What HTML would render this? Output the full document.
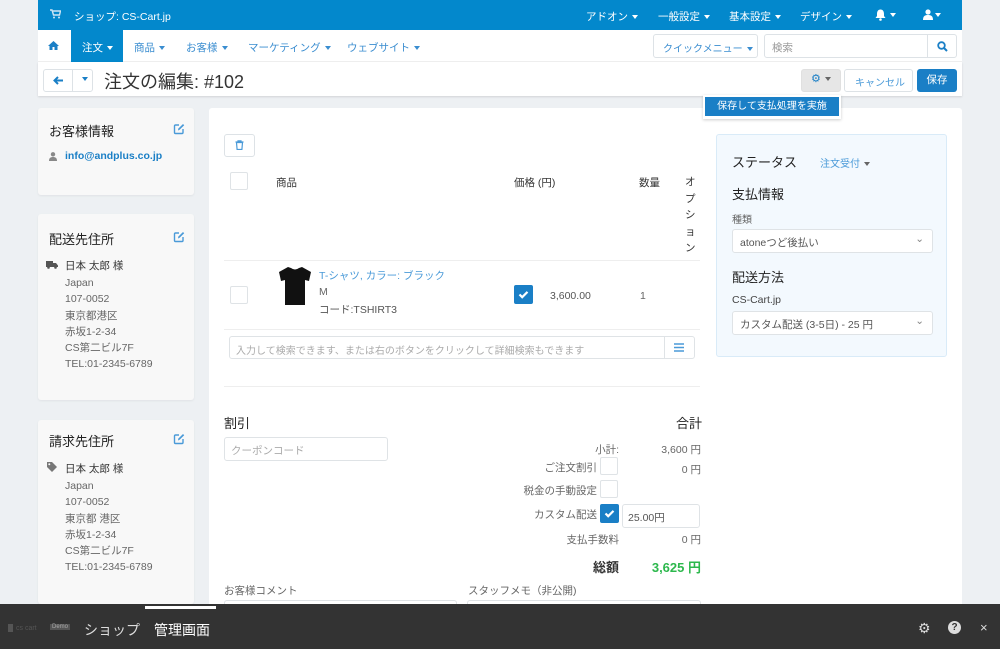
<!DOCTYPE html>
<html><head><meta charset="utf-8"><style>
*{box-sizing:border-box;margin:0;padding:0}
body{width:1000px;height:649px;overflow:hidden;background:#edf0f3;font-family:"Liberation Sans","Noto Sans CJK JP",sans-serif;font-size:11px;color:#333;position:relative}
.a{position:absolute}
.top{left:38px;top:0;width:924px;height:30px;background:#0388cc;color:#fff}
.top span{position:absolute;top:9px;font-size:10.5px}
.car{display:inline-block;width:0;height:0;border-left:3px solid transparent;border-right:3px solid transparent;border-top:4px solid currentColor;vertical-align:middle;margin-left:4px}
.nav{left:38px;top:30px;width:924px;height:32px;background:#fff;border-bottom:1px solid #f0f0f0}
.nav span{position:absolute;top:10px;color:#3a8dd0;font-size:10.5px}
.tb{left:38px;top:62px;width:924px;height:34px;background:#fff;box-shadow:0 1px 2px rgba(0,0,0,.12)}
.btn{position:absolute;border:1px solid #dde2e6;border-radius:3px;background:#fff}
.panel{background:#f8f8f8;border-radius:3px;box-shadow:0 1px 2px rgba(0,0,0,.06)}
.h{font-size:13px;color:#222;position:absolute}
.g{color:#666;position:absolute;font-size:10.5px}
.r{color:#666;position:absolute;font-size:10.5px;text-align:right;white-space:nowrap}
.cb{position:absolute;width:18px;height:18px;border:1px solid #dfe3e6;border-radius:2px;background:#fff}
.cbc{position:absolute;width:19px;height:19px;background:#1a7fc6;border-radius:2px}
.inp{position:absolute;border:1px solid #dfe3e6;border-radius:3px;background:#fff;color:#aaa;font-size:10.5px;padding:7px 6px}
</style></head><body>
<svg width="0" height="0" style="position:absolute"><defs>
<symbol id="ed" viewBox="0 0 12 12"><path d="M6 2H2.5A1 1 0 0 0 1.5 3v6.5a1 1 0 0 0 1 1H9a1 1 0 0 0 1-1V6" fill="none" stroke="#4a9ad8" stroke-width="1.4"/><path d="M5 7.5 5.3 5.6 10 1l1.2 1.2L6.6 6.8z" fill="#4a9ad8"/></symbol>
<symbol id="ck" viewBox="0 0 19 19"><rect width="19" height="19" rx="2" fill="#1a7fc6"/><path d="M5.5 9.5l2.7 2.7 5.3-5.3" fill="none" stroke="#fff" stroke-width="2.2"/></symbol>
</defs></svg>
<div class="a top">
<svg class="a" style="left:12px;top:9px" width="11" height="10" viewBox="0 0 11 10"><path d="M0 1h2l1.5 5h6l1-4H3" fill="none" stroke="#cfe6f5" stroke-width="1.4"/><circle cx="4" cy="8.5" r="1" fill="#cfe6f5"/><circle cx="9" cy="8.5" r="1" fill="#cfe6f5"/></svg>
<span style="left:36px">ショップ: CS-Cart.jp</span>
<span style="left:548px">アドオン<i class="car"></i></span>
<span style="left:620px">一般設定<i class="car"></i></span>
<span style="left:691px">基本設定<i class="car"></i></span>
<span style="left:762px">デザイン<i class="car"></i></span>
<svg class="a" style="left:837px;top:9px" width="11" height="12" viewBox="0 0 11 12"><path d="M5.5 0.5C3 0.5 2 2.5 2 5v2L0.5 9h10L9 7V5C9 2.5 8 0.5 5.5 0.5z" fill="#fff"/><circle cx="5.5" cy="10.5" r="1.3" fill="#fff"/></svg>
<span style="left:848px"><i class="car"></i></span>
<svg class="a" style="left:885px;top:9px" width="10" height="11" viewBox="0 0 10 11"><circle cx="5" cy="3" r="2.6" fill="#fff"/><path d="M0 11c0-4 2-5 5-5s5 1 5 5z" fill="#fff"/></svg>
<span style="left:893px"><i class="car"></i></span>
</div>
<div class="a nav">
<svg class="a" style="left:10px;top:11px" width="11" height="9" viewBox="0 0 11 9"><path d="M5.5 0L0 5h1.5v4h3V6h2v3h3V5H11z" fill="#1a7fc6"/></svg>
<div class="a" style="left:33px;top:0;width:52px;height:32px;background:#0388cc"></div>
<span style="left:44px;color:#fff">注文<i class="car"></i></span>
<span style="left:96px">商品<i class="car"></i></span>
<span style="left:148px">お客様<i class="car"></i></span>
<span style="left:210px">マーケティング<i class="car"></i></span>
<span style="left:309px">ウェブサイト<i class="car"></i></span>
<div class="btn" style="left:615px;top:4px;width:105px;height:24px"></div>
<span style="left:625px;font-size:10px">クイックメニュー<i class="car"></i></span>
<div class="btn" style="left:726px;top:4px;width:193px;height:24px"></div>
<span style="left:734px;color:#999">検索</span>
<div class="a" style="left:889px;top:5px;width:1px;height:22px;background:#dde2e6"></div>
<svg class="a" style="left:899px;top:11px" width="11" height="11" viewBox="0 0 11 11"><circle cx="4.5" cy="4.5" r="3.3" fill="none" stroke="#1a7fc6" stroke-width="1.8"/><path d="M7 7l3 3" stroke="#1a7fc6" stroke-width="2"/></svg>
</div>
<div class="a tb">
<div class="btn" style="left:5px;top:7px;width:50px;height:23px"></div>
<div class="a" style="left:34px;top:8px;width:1px;height:21px;background:#dde2e6"></div>
<svg class="a" style="left:15px;top:14px" width="10" height="9" viewBox="0 0 10 9"><path d="M5 1L1.5 4.5 5 8M1.5 4.5H10" fill="none" stroke="#1a7fc6" stroke-width="2"/></svg>
<span class="a" style="left:40px;top:11px;color:#1a7fc6"><i class="car"></i></span>
<div class="a" style="left:66px;top:6px;font-size:18px;color:#333">注文の編集: #102</div>
<div class="btn" style="left:763px;top:7px;width:40px;height:23px;background:#e6e6e6;border-color:#e0e0e0"></div>
<span class="a" style="left:773px;top:10px;color:#1a7fc6">&#9881;<i class="car" style="color:#666"></i></span>
<div class="btn" style="left:806px;top:7px;width:69px;height:23px"></div>
<span class="a" style="left:817px;top:12px;color:#4a9ad8;font-size:10px">キャンセル</span>
<div class="a" style="left:879px;top:7px;width:40px;height:23px;background:#1a7fc6;border-radius:3px;color:#fff;text-align:center;line-height:23px;font-size:10.5px">保存</div>
</div>
<!-- side panels -->
<div class="a panel" style="left:38px;top:108px;width:156px;height:87px">
<div class="h" style="left:11px;top:13px">お客様情報</div><svg class="a" style="left:135px;top:15px" width="12" height="12"><use href="#ed"/></svg>
<svg class="a" style="left:11px;top:44px" width="8" height="9" viewBox="0 0 8 9"><circle cx="4" cy="2.3" r="2.2" fill="#888"/><path d="M0 9c0-3 1.5-4 4-4s4 1 4 4z" fill="#888"/></svg>
<span class="a" style="left:27px;top:42px;color:#1a7fc6;font-weight:bold;font-size:10.5px">info@andplus.co.jp</span>
</div>
<div class="a panel" style="left:38px;top:214px;width:156px;height:186px">
<div class="h" style="left:11px;top:15px">配送先住所</div><svg class="a" style="left:135px;top:17px" width="12" height="12"><use href="#ed"/></svg>
<svg class="a" style="left:8px;top:47px" width="12" height="8" viewBox="0 0 12 8"><path d="M0 0h7v6H0zM7 2h3l2 2.5V6H7z" fill="#555"/><circle cx="2.5" cy="6.5" r="1.3" fill="#555"/><circle cx="9.5" cy="6.5" r="1.3" fill="#555"/></svg>
<span class="a" style="left:27px;top:44px;color:#333;font-size:10.5px">日本 太郎 様</span>
<div class="g" style="left:27px;top:61px;line-height:16.3px">Japan<br>107-0052<br>東京都港区<br>赤坂1-2-34<br>CS第二ビル7F<br>TEL:01-2345-6789</div>
</div>
<div class="a panel" style="left:38px;top:420px;width:156px;height:184px">
<div class="h" style="left:11px;top:11px">請求先住所</div><svg class="a" style="left:135px;top:13px" width="12" height="12"><use href="#ed"/></svg>
<svg class="a" style="left:9px;top:42px" width="10" height="10" viewBox="0 0 10 10"><path d="M0 0h5l5 5-5 5-5-5z" fill="#777"/><circle cx="2.3" cy="2.3" r="1" fill="#f8f8f8"/></svg>
<span class="a" style="left:27px;top:41px;color:#333;font-size:10.5px">日本 太郎 様</span>
<div class="g" style="left:27px;top:58px;line-height:16.3px">Japan<br>107-0052<br>東京都 港区<br>赤坂1-2-34<br>CS第二ビル7F<br>TEL:01-2345-6789</div>
</div>
<!-- main -->
<div class="a" style="left:209px;top:108px;width:753px;height:500px;background:#fff;border-radius:3px">
<div class="btn" style="left:15px;top:26px;width:31px;height:23px"></div>
<svg class="a" style="left:26px;top:32px" width="9" height="10" viewBox="0 0 9 10"><path d="M0.5 2h8M3 2V0.8h3V2M1.5 2.5l.6 7h4.8l.6-7z" fill="none" stroke="#4a9ad8" stroke-width="1.2"/></svg>
<div class="cb" style="left:21px;top:64px"></div>
<span class="a" style="left:67px;top:67px;font-size:10.5px">商品</span>
<span class="a" style="left:305px;top:67px;font-size:10.5px">価格 (円)</span>
<span class="a" style="left:430px;top:67px;font-size:10.5px">数量</span>
<div class="a" style="left:476px;top:66px;width:12px;line-height:16.5px;font-size:10.5px">オ<br>プ<br>シ<br>ョ<br>ン</div>
<div class="a" style="left:15px;top:152px;width:476px;height:1px;background:#eee"></div>
<div class="cb" style="left:21px;top:178px"></div>
<svg class="a" style="left:69px;top:157px" width="34" height="42" viewBox="0 0 34 42"><path d="M10 2 L13 3 Q17 6 21 3 L24 2 L33 7 L31 16 L27 15 L27 40 L7 40 L7 15 L3 16 L1 7 Z" fill="#111"/></svg>
<span class="a" style="left:110px;top:160px;color:#4a9ad8;font-size:10.5px">T-シャツ, カラー: ブラック</span>
<span class="g" style="left:110px;top:178px">M</span>
<span class="g" style="left:110px;top:194px;color:#555">コード:TSHIRT3</span>
<svg class="a" style="left:305px;top:177px" width="19" height="19"><use href="#ck"/></svg>
<span class="g" style="left:341px;top:182px;color:#555">3,600.00</span>
<span class="g" style="left:431px;top:182px">1</span>
<div class="a" style="left:15px;top:221px;width:476px;height:1px;background:#eee"></div>
<div class="inp" style="left:20px;top:228px;width:466px;height:23px;padding:5px 6px;color:#aaa;font-size:10px">入力して検索できます、または右のボタンをクリックして詳細検索もできます</div>
<div class="a" style="left:455px;top:229px;width:1px;height:21px;background:#dfe3e6"></div>
<svg class="a" style="left:465px;top:235px" width="10" height="9" viewBox="0 0 10 9"><path d="M0 1h10M0 4.5h10M0 8h10" stroke="#4a9ad8" stroke-width="1.6"/></svg>
<div class="a" style="left:15px;top:278px;width:476px;height:1px;background:#eee"></div>
<div class="h" style="left:15px;top:305px">割引</div>
<div class="h" style="left:467px;top:305px">合計</div>
<div class="inp" style="left:15px;top:329px;width:164px;height:24px;padding:5px 6px">クーポンコード</div>
<span class="r" style="right:343px;top:334px">小計:</span><span class="r" style="right:261px;top:334px">3,600 円</span>
<span class="r" style="right:365px;top:352px">ご注文割引</span><div class="cb" style="left:391px;top:349px"></div><span class="r" style="right:261px;top:354px">0 円</span>
<span class="r" style="right:365px;top:375px">税金の手動設定</span><div class="cb" style="left:391px;top:372px"></div>
<span class="r" style="right:365px;top:399px">カスタム配送</span><svg class="a" style="left:391px;top:396px" width="19" height="19"><use href="#ck"/></svg>
<div class="inp" style="left:413px;top:396px;width:78px;height:24px;padding:5px 5px;color:#555">25.00円</div>
<span class="r" style="right:343px;top:424px">支払手数料</span><span class="r" style="right:261px;top:424px">0 円</span>
<span class="r" style="right:343px;top:449px;font-size:13px;font-weight:bold;color:#333">総額</span>
<span class="r" style="right:261px;top:449px;font-size:13px;font-weight:bold;color:#2db84d">3,625 円</span>
<span class="g" style="left:15px;top:475px">お客様コメント</span>
<span class="g" style="left:259px;top:475px">スタッフメモ（非公開)</span>
<div class="a" style="left:15px;top:492px;width:233px;height:20px;border:1px solid #dfe3e6;border-radius:3px"></div>
<div class="a" style="left:258px;top:492px;width:234px;height:20px;border:1px solid #dfe3e6;border-radius:3px"></div>
<!-- status box -->
<div class="a" style="left:507px;top:26px;width:231px;height:223px;background:#f3f9fe;border:1px solid #d9ebf8;border-radius:3px">
<div class="h" style="left:15px;top:17px">ステータス</div>
<span class="a" style="left:103px;top:20px;color:#4a9ad8;font-size:10px">注文受付<i class="car" style="color:#666"></i></span>
<div class="h" style="left:15px;top:49px">支払情報</div>
<span class="g" style="left:15px;top:76px;font-size:10px">種類</span>
<div class="inp" style="left:15px;top:94px;width:201px;height:24px;padding:5px 7px;color:#555">atoneつど後払い<span style="position:absolute;right:8px;top:3px;color:#888">&#8964;</span></div>
<div class="h" style="left:15px;top:132px">配送方法</div>
<span class="g" style="left:15px;top:159px;color:#444">CS-Cart.jp</span>
<div class="inp" style="left:15px;top:176px;width:201px;height:24px;padding:5px 7px;color:#555">カスタム配送 (3-5日) - 25 円<span style="position:absolute;right:8px;top:3px;color:#888">&#8964;</span></div>
</div>
</div>
<!-- dropdown -->
<div class="a" style="left:703px;top:95px;width:138px;height:24px;background:#fff;box-shadow:0 1px 3px rgba(0,0,0,.2)"></div>
<div class="a" style="left:705px;top:97px;width:134px;height:19px;background:#1a7fc6;color:#fff;font-size:10px;text-align:center;line-height:19px">保存して支払処理を実施</div>
<!-- bottom bar -->
<div class="a" style="left:0;top:604px;width:1000px;height:45px;background:#333"></div>
<div class="a" style="left:145px;top:606px;width:71px;height:3px;background:#fff"></div>
<div class="a" style="left:8px;top:624px;width:5px;height:8px;background:#555"></div>
<span class="a" style="left:16px;top:625px;font-size:7px;color:#555">cs cart</span>
<span class="a" style="left:50px;top:624px;font-size:6px;color:#aaa;background:#555;padding:0 2px">Demo</span>
<span class="a" style="left:84px;top:620px;font-size:14px;color:#ddd">ショップ</span>
<span class="a" style="left:154px;top:620px;font-size:14px;color:#fff">管理画面</span>
<span class="a" style="left:918px;top:620px;font-size:14px;color:#ddd">&#9881;</span>
<span class="a" style="left:948px;top:621px;width:13px;height:13px;border-radius:50%;background:#ddd;color:#333;font-size:10px;font-weight:bold;text-align:center;line-height:13px">?</span>
<span class="a" style="left:980px;top:620px;font-size:13px;color:#ddd">&#215;</span>
</body></html>
